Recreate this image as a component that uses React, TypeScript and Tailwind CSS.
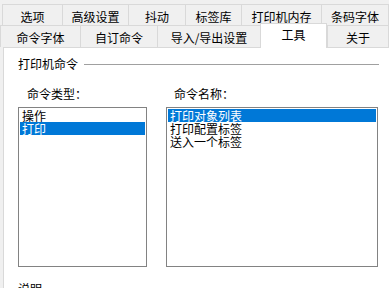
import React from "react";

const font = { fontFamily: '"Noto Sans CJK SC", "Noto Sans", sans-serif' };

function Tab({ w, label, last }: { w: string; label: string; last?: boolean }) {
  return (
    <div
      className={`${w} h-full flex items-center justify-center pt-[3px] border-l border-t border-[#d9d9d9] bg-[#f0f0f0] text-[12px] leading-[14px] text-black ${last ? "border-r" : ""}`}
    >
      {label}
    </div>
  );
}

export default function App() {
  return (
    <div className="w-[389px] h-[288px] bg-[#f0f0f0] overflow-hidden flex flex-col" style={font}>
      <div className="h-[4px] shrink-0" />
      <div className="flex h-[21px] shrink-0 pl-[2px]">
        <Tab w="w-[60px]" label="选项" />
        <Tab w="w-[66px]" label="高级设置" />
        <Tab w="w-[57px]" label="抖动" />
        <Tab w="w-[56px]" label="标签库" />
        <Tab w="w-[80px]" label="打印机内存" />
        <Tab w="w-[68px]" label="条码字体" last />
      </div>
      <div className="flex h-[22px] shrink-0">
        <Tab w="w-[80px]" label="命令字体" />
        <Tab w="w-[77px]" label="自订命令" />
        <Tab w="w-[103px]" label="导入/导出设置" />
        <div className="relative -top-[2px] z-10 w-[67px] h-[25px] bg-white border-x border-t border-[#d9d9d9] flex items-center justify-center pb-[2px] text-[12px] leading-[14px] text-black">
          工具
        </div>
        <Tab w="w-[62px]" label="关于" last />
      </div>
      <div className="flex-1 ml-[3px] bg-white border-l border-t border-[#d9d9d9] pl-[14px] text-black">
        <div className="flex items-center mt-[9px] h-[14px] pr-[10px]">
          <span className="text-[12px] leading-[14px]">打印机命令</span>
          <div className="flex-1 h-px bg-[#a0a0a0] ml-[6px]" />
        </div>
        <div className="flex mt-[16px] gap-[19px]">
          <div className="w-[129px] flex flex-col">
            <div className="pl-[9px] text-[12px] leading-[14px] h-[14px]">命令类型：</div>
            <div className="mt-[6px] h-[160px] border border-[#828282] p-px text-[12px] leading-[13px]">
              <div className="h-[13px] pl-[2px]">操作</div>
              <div className="h-[13px] pl-[2px] bg-[#0078d7] text-white">打印</div>
            </div>
          </div>
          <div className="w-[212px] flex flex-col">
            <div className="pl-[8px] text-[12px] leading-[14px] h-[14px]">命令名称：</div>
            <div className="mt-[6px] h-[160px] border border-[#828282] p-px text-[12px] leading-[13px]">
              <div className="h-[13px] pl-[2px] bg-[#0078d7] text-white">打印对象列表</div>
              <div className="h-[13px] pl-[2px]">打印配置标签</div>
              <div className="h-[13px] pl-[2px]">送入一个标签</div>
            </div>
          </div>
        </div>
        <div className="mt-[15px] text-[12px] leading-[14px]">说明</div>
      </div>
    </div>
  );
}
